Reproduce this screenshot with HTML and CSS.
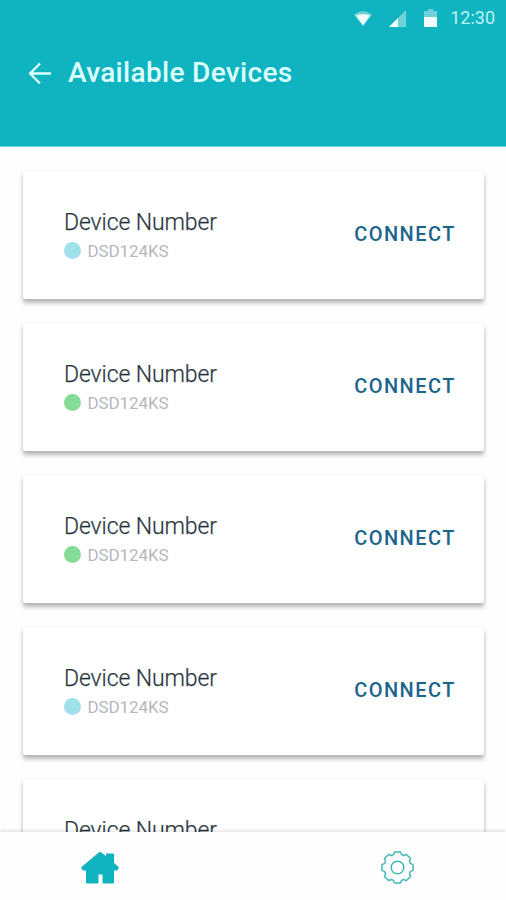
FILE: index.html
```html
<!DOCTYPE html>
<html lang="en">
<head>
<meta charset="utf-8">
<title>Available Devices</title>
<link rel="stylesheet" href="styles.css">
</head>
<body>
<div class="app">
  <header class="header">
    <div class="status">
      <svg class="wifi" width="18" height="15" viewBox="0 0 18 15"><path d="M0 3.500Q9-3 18 3.500L9 15Z" fill="#fff" opacity=".4"/><path d="M1.800 4.500Q9 2 16.200 4.500L9 14.500Z" fill="#f2ffff"/></svg>
      <svg class="signal" width="17" height="17" viewBox="0 0 17 17"><path d="M17 0V17H0Z" fill="#fff" opacity=".4"/><path d="M9 8V17H0Z" fill="#f2ffff"/></svg>
      <svg class="battery" width="13" height="18" viewBox="0 0 13 18"><path d="M0 2H4V0H9V2H13V9H0Z" fill="#fff" opacity=".4"/><path d="M0 8H13V18H0Z" fill="#f2ffff"/></svg>
      <span class="clock">12:30</span>
    </div>
    <div class="titlebar">
      <svg class="back" width="24" height="24" viewBox="0 0 24 24"><path d="M24 12.500H3M13 2.500L3 12.500L13 22.500" fill="none" stroke="#dcffff" stroke-width="2.300"/></svg>
      <h1>Available Devices</h1>
    </div>
  </header>
  <main class="list">
    <article class="card"><div><h2>Device Number</h2><p><i class="dot blue"></i><span>DSD124KS</span></p></div><button>CONNECT</button></article>
    <article class="card"><div><h2>Device Number</h2><p><i class="dot green"></i><span>DSD124KS</span></p></div><button>CONNECT</button></article>
    <article class="card"><div><h2>Device Number</h2><p><i class="dot green"></i><span>DSD124KS</span></p></div><button>CONNECT</button></article>
    <article class="card"><div><h2>Device Number</h2><p><i class="dot blue"></i><span>DSD124KS</span></p></div><button>CONNECT</button></article>
    <article class="card"><div><h2>Device Number</h2></div></article>
  </main>
  <nav class="nav">
    <svg class="home" width="40" height="34" viewBox="0 0 40 34"><path d="M20 1L26.500 6V3H33.500V12L38.500 16.500L37 19H33.500V32H23V23H18V32H6.500V19H3L1.500 16.500Z" fill="#10b4c1" stroke="#10b4c1" stroke-linejoin="round"/></svg>
    <svg class="gear" width="35" height="35" viewBox="-18 -18 36 36" fill="none" stroke="#3fb9b5" stroke-width="1.500" stroke-linejoin="round"><path d="M-4.200-13.200L-3-16L3-16L4.200-13.200L6.360-12.300L9.190-13.430L13.430-9.190L12.300-6.360L13.200-4.200L16-3L16 3L13.200 4.200L12.300 6.360L13.430 9.190L9.190 13.430L6.360 12.300L4.200 13.200L3 16L-3 16L-4.200 13.200L-6.360 12.300L-9.190 13.430L-13.430 9.190L-12.300 6.360L-13.200 4.200L-16 3L-16-3L-13.200-4.200L-12.300-6.360L-13.430-9.190L-9.190-13.430L-6.360-12.300Z"/><circle r="6.500"/></svg>
  </nav>
</div>
</body>
</html>
```
FILE: styles.css
```css
* { box-sizing: border-box; margin: 0; }
body { font-family: Roboto, "Liberation Sans", sans-serif; background: #fefefe; }
.app { height: 900px; display: flex; flex-direction: column; overflow: hidden; }
.header { flex: none; height: 147px; background: #10b4c1; border-bottom: 1px solid #6fd2da; }
.status { height: 36px; display: flex; justify-content: flex-end; align-items: center; padding-right: 11px; }
.wifi { margin-right: 17px; }
.signal { margin-right: 18px; }
.battery { margin-right: 13px; }
.clock { font-size: 18px; line-height: 38px; color: #b9f3f5; }
.titlebar { display: flex; align-items: center; height: 74px; padding-left: 27px; }
.back { margin-right: 17px; }
h1 { font-size: 28px; font-weight: 500; line-height: 36px; letter-spacing: .32px; color: #dcffff; }
.list { flex: 1; min-height: 0; overflow: hidden; padding: 24px 22px 0 23px; display: flex; flex-direction: column; gap: 24px; }
.card { flex: none; height: 128px; display: flex; justify-content: space-between; padding: 36px 28px 0 41px; border-radius: 2px; background: #fff; box-shadow: 0 4px 4px rgba(0,0,0,.28), 0 0 3px rgba(0,0,0,.06); }
h2 { font-size: 23px; font-weight: 300; line-height: 32px; letter-spacing: -.1px; color: #1f3038; -webkit-text-stroke: .25px #40525a; }
.card p { display: flex; align-items: center; gap: 6.500px; height: 23px; font-size: 17px; letter-spacing: -.1px; color: #b4b8bc; }
.dot { width: 17px; height: 17px; border-radius: 50%; }
.blue { background: #a0e0eb; }
.green { background: #86db99; }
button { align-self: flex-start; margin-top: 12px; padding: 0; border: 0; background: none; font: 500 20px/30px Roboto, sans-serif; letter-spacing: 1.480px; color: #1c648c; }
.nav { flex: none; position: relative; height: 68px; display: flex; justify-content: space-between; align-items: center; padding: 3px 91px 0 80px; background: #fefefe; box-shadow: 0 -1px 4px rgba(0,0,0,.14); }
```
